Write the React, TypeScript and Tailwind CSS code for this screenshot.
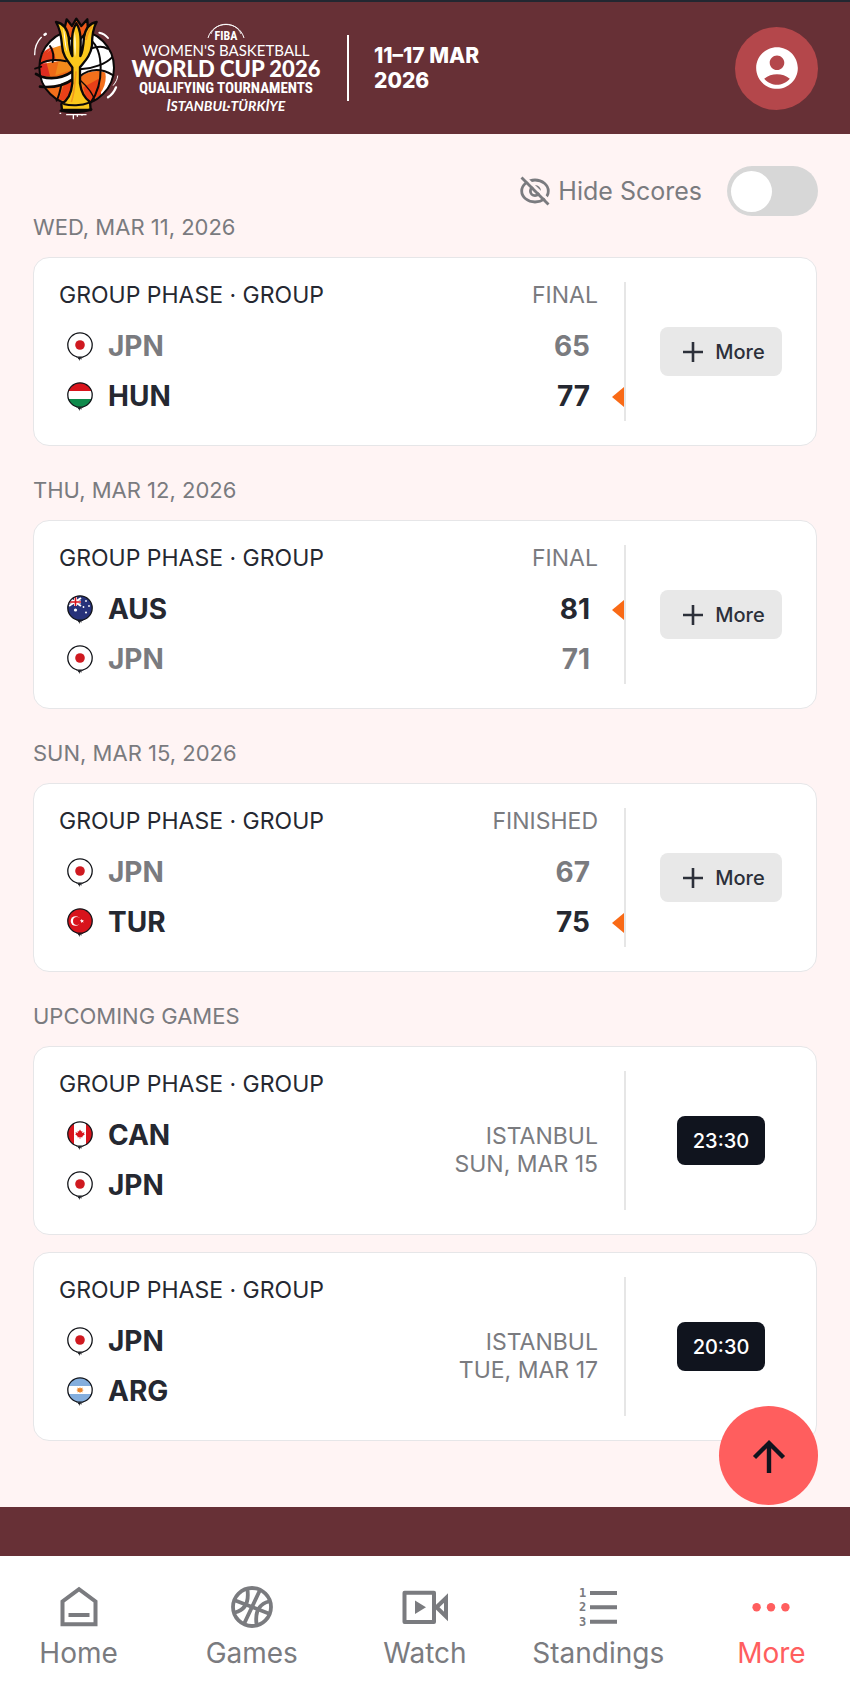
import type { ReactNode } from "react";
import { MdAccountCircle } from "react-icons/md";

type Team = { code: string; score?: number; winner?: boolean };

type Game = {
  id: string;
  teams: Team[];
  status?: string;
  city?: string;
  day?: string;
  time?: string;
};

type Section = { title: string; games: Game[] };

const sections: Section[] = [
  {
    title: "WED, MAR 11, 2026",
    games: [
      { id: "jpn-hun", status: "FINAL", teams: [{ code: "JPN", score: 65 }, { code: "HUN", score: 77, winner: true }] },
    ],
  },
  {
    title: "THU, MAR 12, 2026",
    games: [
      { id: "aus-jpn", status: "FINAL", teams: [{ code: "AUS", score: 81, winner: true }, { code: "JPN", score: 71 }] },
    ],
  },
  {
    title: "SUN, MAR 15, 2026",
    games: [
      { id: "jpn-tur", status: "FINISHED", teams: [{ code: "JPN", score: 67 }, { code: "TUR", score: 75, winner: true }] },
    ],
  },
  {
    title: "UPCOMING GAMES",
    games: [
      { id: "can-jpn", teams: [{ code: "CAN" }, { code: "JPN" }], city: "ISTANBUL", day: "SUN, MAR 15", time: "23:30" },
      { id: "jpn-arg", teams: [{ code: "JPN" }, { code: "ARG" }], city: "ISTANBUL", day: "TUE, MAR 17", time: "20:30" },
    ],
  },
];

const flagArt: Record<string, ReactNode> = {
  JPN: (
    <>
      <rect width="26" height="26" fill="#fff" />
      <circle cx="13" cy="13" r="4.8" fill="#cf1920" />
    </>
  ),
  HUN: (
    <>
      <rect width="26" height="26" fill="#fff" />
      <rect width="26" height="9" fill="#d8141c" />
      <rect y="17" width="26" height="9" fill="#0f8a4c" />
    </>
  ),
  AUS: (
    <>
      <rect width="26" height="26" fill="#27327a" />
      <path d="M2 3L14 11M14 3L2 11" stroke="#fff" strokeWidth="2" />
      <path d="M8.5 0V11M0 7H14" stroke="#fff" strokeWidth="3" />
      <path d="M8.5 0V11M0 7H14" stroke="#d8141c" strokeWidth="1.6" />
      <circle cx="8.5" cy="15" r="1.6" fill="#fff" />
      <circle cx="19" cy="6" r="0.9" fill="#fff" />
      <circle cx="16.5" cy="12" r="0.9" fill="#fff" />
      <circle cx="22" cy="11" r="0.9" fill="#fff" />
      <circle cx="19" cy="17.5" r="1" fill="#fff" />
    </>
  ),
  TUR: (
    <>
      <rect width="26" height="26" fill="#d8141c" />
      <circle cx="8.5" cy="13" r="4.8" fill="#fff" />
      <circle cx="9.9" cy="13" r="3.9" fill="#d8141c" />
      <path d="M14.6 10.8l.8 1.4 1.6-.3-1.1 1.2.8 1.5-1.5-.7-1.2 1.1.2-1.6-1.5-.8 1.6-.3z" fill="#fff" />
    </>
  ),
  CAN: (
    <>
      <rect width="26" height="26" fill="#fff" />
      <rect width="7" height="26" fill="#d8141c" />
      <rect x="19" width="7" height="26" fill="#d8141c" />
      <path d="M13 8.5l1.2 2 1.2-.4-.3 2 2.4-.8-.5 1.4.9.6-2.5 2 .2 1H13.3v1.8h-.6v-1.8h-2.3l.2-1-2.5-2 .9-.6-.5-1.4 2.4.8-.3-2 1.2.4z" fill="#d8141c" />
    </>
  ),
  ARG: (
    <>
      <rect width="26" height="26" fill="#fff" />
      <rect width="26" height="9" fill="#84aedd" />
      <rect y="17" width="26" height="9" fill="#84aedd" />
      <path d="M13 10l.8 1.4 1.8-.8-.3 1.8 1.5.6-1.5.8.2 1.6-1.6-.6-.9 1.4-.9-1.4-1.6.6.2-1.6-1.5-.8 1.5-.6-.3-1.8 1.8.8z" fill="#e8842a" />
    </>
  ),
};

const Flag = ({ code }: { code: string }) => {
  // ids may repeat between cards, the clip shape is the same everywhere
  return (
    <svg viewBox="0 0 26 29" className="w-[26px] h-[29px] shrink-0" aria-hidden="true">
      <defs>
        <clipPath id="flag-ball">
          <circle cx="13" cy="13" r="12.3" />
        </clipPath>
      </defs>
      <path d="M8 24h10l-2.5 2-.8-.3-.5 2.3-.6-1.8-1 2.8-.6-2.6-.8 1.2-.4-1.8-1.2-.2z" fill="#14161b" />
      <g clipPath="url(#flag-ball)">{flagArt[code]}</g>
      <circle cx="13" cy="13" r="12.2" fill="none" stroke="#14161b" strokeWidth="1.3" />
    </svg>
  );
};

const Emblem = () => (
  <svg viewBox="96 48 264 312" className="w-[88px] h-[104px] shrink-0" aria-hidden="true">
    <defs>
      <clipPath id="emblem-ball">
        <circle cx="230" cy="203" r="111" />
      </clipPath>
    </defs>
    <g clipPath="url(#emblem-ball)">
      <rect x="110" y="85" width="240" height="240" fill="#fff" />
      <path d="M110 205C125 190 170 178 212 186L224 218C190 240 150 240 110 228Z" fill="#ef6a17" />
      <path d="M112 200C118 160 140 138 182 140L200 182C165 178 130 186 112 200Z" fill="#e53a1c" />
      <path d="M158 140L182 134L200 182L168 182Z" fill="#f28a1b" />
      <path d="M176 182L212 186L222 208L166 226Z" fill="#f28a1b" />
      <path d="M116 190L140 190L150 228L108 230Z" fill="#dd2c20" />
      <path d="M108 232C150 242 190 232 218 214V238C190 256 155 264 116 258Z" fill="#fff" />
      <path d="M120 258C160 262 190 252 218 236L214 322L150 300Z" fill="#f26f1b" />
      <path d="M190 258L216 240V300L176 300Z" fill="#e94018" />
      <path d="M238 232C265 212 295 208 316 218C322 250 306 290 262 312L240 280Z" fill="#f26f1b" />
      <path d="M250 262L296 236L304 284L262 312Z" fill="#e94018" />
      <path d="M140 160L190 110L184 136L152 146Z" fill="#fff" />
    </g>
    <g fill="none" stroke="#0b0808" strokeWidth="6" strokeLinecap="round">
      <circle cx="230" cy="203" r="112" />
      <path d="M120 192C140 180 170 178 198 184" />
      <path d="M108 222L124 230C160 240 194 230 218 214" strokeWidth="8" />
      <path d="M120 260C160 264 196 254 218 238" strokeWidth="8" />
      <path d="M150 138C158 150 162 170 158 186" />
      <path d="M184 254C180 276 176 290 170 302" />
      <path d="M238 230C268 206 304 204 340 226" />
      <path d="M240 208C280 206 320 190 336 172" />
      <path d="M272 120C310 150 314 250 272 308" />
      <path d="M262 150C290 138 310 138 322 146" />
      <path d="M240 240C262 260 280 282 284 302" strokeWidth="4" />
      <path d="M105 206L124 200" strokeWidth="5" />
    </g>
    <g stroke="#0b0808" strokeWidth="7" strokeLinejoin="round">
      <path d="M192 92L200 58L216 78L229 56L244 78L262 58L264 92L242 116H210Z" fill="#f05a1a" />
      <path
        d="M168 66C190 70 202 86 206 112C208 140 210 158 217 168C216 130 212 96 229 70C246 96 242 130 241 168C248 158 250 140 252 112C256 86 268 70 290 66C278 86 276 110 276 136C272 168 254 184 240 202V250C244 280 256 296 270 306L272 330H186L184 312C206 300 214 280 217 250V202C204 184 188 168 186 136C184 110 180 86 168 66Z"
        fill="#fbc81c"
      />
      <path d="M190 312C212 318 244 318 268 308" fill="none" strokeWidth="6" />
      <path d="M182 332C206 338 246 338 274 328" fill="none" strokeWidth="7" strokeLinecap="round" />
    </g>
    <path d="M224 96C220 120 222 150 225 172C229 150 230 120 224 96Z" fill="#fff3b0" />
    <path d="M190 84C196 100 196 130 202 156C194 140 192 110 190 84Z" fill="#fff" />
    <path d="M258 120C262 100 268 88 276 80" fill="none" stroke="#f39a1b" strokeWidth="6" />
    <path d="M228 214C224 250 224 280 214 306" fill="none" stroke="#f39a1b" strokeWidth="5" />
    <g fill="none" stroke="#fff" strokeWidth="5" strokeLinecap="round">
      <path d="M104 164C104 142 112 124 124 112" strokeWidth="4" />
      <path d="M134 104L137 102" strokeWidth="8" />
      <path d="M298 98C308 100 318 106 324 114" strokeWidth="6" />
      <path d="M324 292C336 284 344 272 348 262" strokeWidth="7" />
      <path d="M340 256C348 246 352 238 353 228" strokeWidth="3" />
      <path d="M200 344H258M220 344V356M232 344V349M180 340H182M246 344V346" strokeWidth="4" />
    </g>
  </svg>
);

const Wordmark = () => (
  <svg viewBox="0 0 196 94" className="w-[196px] h-[94px] shrink-0 ml-2" role="img" aria-label="FIBA Women's Basketball World Cup 2026 Qualifying Tournaments">
    <g fill="none" stroke="#fff">
      <path d="M80 17C85 -1 111 -1 116 17" strokeWidth="1" />
      <path d="M83 13C88 0 108 0 113 13" strokeWidth="1" opacity="0.8" />
    </g>
    <g fill="#fff" textAnchor="middle">
      <text x="98" y="19" fontSize="12" fontWeight="700" fontFamily="'Liberation Sans Narrow', 'Roboto Condensed', Roboto, sans-serif">FIBA</text>
      <text x="98" y="35" fontSize="15" fontWeight="400" fontFamily="Lato, sans-serif">WOMEN'S BASKETBALL</text>
      <text x="98" y="56" fontSize="22" fontWeight="900" fontFamily="Lato, sans-serif">WORLD CUP 2026</text>
      <text x="98" y="72" fontSize="15" fontWeight="700" fontFamily="'Liberation Sans Narrow', 'Roboto Condensed', Roboto, sans-serif">QUALIFYING TOURNAMENTS</text>
      <text x="98" y="90" fontSize="14" fontWeight="700" fontStyle="italic" fontFamily="Lato, sans-serif">İSTANBUL·TÜRKİYE</text>
    </g>
  </svg>
);

const Header = () => (
  <header className="flex items-center h-[134px] pl-8 pr-8 bg-[#673036] border-t-2 border-[#222731] text-white">
    <a href="#home" className="flex items-center" aria-label="Tournament home">
      <Emblem />
      <Wordmark />
    </a>
    <div className="w-[2px] h-[66px] ml-[23px] bg-white" />
    <p className="ml-[25px] text-[21px] leading-[25px] font-extrabold">
      11–17 MAR
      <br />
      2026
    </p>
    <button type="button" aria-label="Account" className="ml-auto w-[83px] h-[83px] rounded-full bg-[#b4474b] flex items-center justify-center">
      <MdAccountCircle size={50} />
    </button>
  </header>
);

const HideScores = () => (
  <div className="flex items-center justify-end h-[50px] -mr-px text-[#7a7b7f]">
    <svg viewBox="0 0 30 30" className="w-[30px] h-[30px] mr-2" fill="none" stroke="currentColor" aria-hidden="true">
      <ellipse cx="15" cy="15" rx="13.3" ry="11" strokeWidth="2.8" />
      <circle cx="15" cy="15" r="4.6" strokeWidth="2.8" />
      <path d="M3.5 0L31 26.5" stroke="#fff4f4" strokeWidth="3" />
      <path d="M1.5 1.5L28.5 28.5" strokeWidth="2.8" />
    </svg>
    <label htmlFor="hide-scores" className="text-[25px] leading-[32px]">Hide Scores</label>
    <input
      id="hide-scores"
      type="checkbox"
      role="switch"
      className="appearance-none ml-[25px] w-[91px] h-[50px] p-1 rounded-full bg-[#d7d7d7] flex items-center before:block before:w-[41px] before:h-[41px] before:rounded-full before:bg-white checked:justify-end checked:bg-[#ff5e5e]"
    />
  </div>
);

const TeamRow = ({ team, played }: { team: Team; played: boolean }) => (
  <div className={`relative flex items-center h-[50px] pl-2 text-[28px] leading-8 font-bold ${played && !team.winner ? "text-[#7a7b7f]" : "text-[#252831]"}`}>
    <Flag code={team.code} />
    <span className="ml-[15px]">{team.code}</span>
    {played && <span className="ml-auto pr-[34px]">{team.score}</span>}
    {team.winner && (
      <svg viewBox="0 0 12 20" className="absolute right-0 top-4 w-3 h-5" aria-label="Winner">
        <path d="M12 0V20L0 10Z" fill="#f96a16" />
      </svg>
    )}
  </div>
);

const GameCard = ({ game }: { game: Game }) => {
  const played = !!game.status;

  return (
    <article className="flex py-6 bg-white border border-[#e6e6e8] rounded-2xl">
      <div className="flex-1 ml-[25px] border-r-2 border-[#e6e6e6]">
        <div className="flex justify-between h-[26px] mb-[13px] pr-[26px] text-[23px] leading-[26px]">
          <h3 className="text-[#252831]">GROUP PHASE · GROUP</h3>
          <span className="text-[#7a7b7f]">{game.status}</span>
        </div>
        <div className="flex justify-between">
          <div className="flex-1">
            {game.teams.map((team) => (
              <TeamRow key={team.code} team={team} played={played} />
            ))}
          </div>
          {!played && (
            <p className="pt-3 pr-[26px] text-right text-[23px] leading-7 text-[#7a7b7f]">
              {game.city}
              <br />
              {game.day}
            </p>
          )}
        </div>
      </div>
      <div className="w-[190px] flex items-center justify-center">
        {played ? (
          <button type="button" className="flex items-center justify-center gap-3 w-[122px] h-[49px] pl-1.5 rounded-lg bg-[#e8e8e8] text-[20px] font-medium text-[#2c303a]">
            <svg viewBox="0 0 20 20" className="w-5 h-5" stroke="currentColor" strokeWidth="2.6" aria-hidden="true">
              <path d="M10 0V20M0 10H20" />
            </svg>
            More
          </button>
        ) : (
          <a href={`#${game.id}`} className="flex items-center justify-center w-[88px] h-[49px] rounded-lg bg-[#10141e] text-[20px] font-medium text-white">
            {game.time}
          </a>
        )}
      </div>
    </article>
  );
};

const navItems: { label: string; active?: boolean; icon: ReactNode }[] = [
  {
    label: "Home",
    icon: (
      <>
        <path d="M7.5 41.2V18.5L24 6.2L40.5 18.5V41.2Z" strokeWidth="4" />
        <path d="M13.5 32H34.5" strokeWidth="4" />
      </>
    ),
  },
  {
    label: "Games",
    icon: (
      <>
        <circle cx="24" cy="24" r="19" strokeWidth="3.8" />
        <path d="M32 7L16 41M6 17L42 31" strokeWidth="3.8" />
        <path d="M19.5 7C21 19 17 27 7 29.5M28.5 41C27 29 31 21 41 18.5" strokeWidth="3.8" />
      </>
    ),
  },
  {
    label: "Watch",
    icon: (
      <>
        <path d="M3.5 9.8H33V39H3.5Z" strokeWidth="4" strokeLinejoin="round" />
        <path d="M14 17.5V31L25 24.2Z" fill="currentColor" stroke="none" />
        <path d="M35.5 24.2L45 15V33.5Z" strokeWidth="4" />
      </>
    ),
  },
  {
    label: "Standings",
    icon: (
      <>
        <path d="M16 10H43M16 24.3H43M16 38.7H43" strokeWidth="4" />
        <g fill="currentColor" stroke="none" fontSize="12" fontWeight="700" fontFamily="'DejaVu Sans Mono', monospace">
          <text x="5" y="14">1</text>
          <text x="5" y="28">2</text>
          <text x="5" y="43">3</text>
        </g>
      </>
    ),
  },
  {
    label: "More",
    active: true,
    icon: (
      <g fill="currentColor" stroke="none">
        <circle cx="9.6" cy="24.3" r="4.2" />
        <circle cx="24" cy="24.3" r="4.2" />
        <circle cx="38.4" cy="24.3" r="4.2" />
      </g>
    ),
  },
];

const BottomNav = () => (
  <nav className="bg-white overflow-hidden">
    <ul className="grid grid-cols-5 -mx-2 pt-[27px] pb-[23px]">
      {navItems.map((item) => (
        <li key={item.label}>
          <a
            href={`#${item.label.toLowerCase()}`}
            className={`flex flex-col items-center gap-1.5 text-[28px] leading-8 ${item.active ? "text-[#ff5e5e]" : "text-[#7a7b7f]"}`}
          >
            <svg viewBox="0 0 48 48" className="w-12 h-12" fill="none" stroke="currentColor" aria-hidden="true">
              {item.icon}
            </svg>
            {item.label}
          </a>
        </li>
      ))}
    </ul>
  </nav>
);

const App = () => {
  return (
    <div className="bg-[#fff4f4] font-['Inter',sans-serif]">
      <Header />
      <main className="relative px-[33px] pt-8 pb-[66px]">
        <HideScores />
        <div className="flex flex-col gap-[33px]">
          {sections.map((section) => (
            <section key={section.title}>
              <h2 className="mb-[18px] text-[22px] leading-[23px] text-[#7a7b7f]">{section.title}</h2>
              <div className="flex flex-col gap-[17px]">
                {section.games.map((game) => (
                  <GameCard key={game.id} game={game} />
                ))}
              </div>
            </section>
          ))}
        </div>
        <button type="button" aria-label="Back to top" className="absolute right-8 bottom-0.5 w-[99px] h-[99px] rounded-full bg-[#ff5e5e] text-[#10141e] flex items-center justify-center">
          <svg viewBox="0 0 34 34" className="w-[34px] h-[34px]" fill="none" stroke="currentColor" strokeWidth="4.4" aria-hidden="true">
            <path d="M17 34V4M2.5 18.5L17 4L31.5 18.5" />
          </svg>
        </button>
      </main>
      <div className="h-[49px] bg-[#673036]" />
      <BottomNav />
    </div>
  );
};

export default App;
